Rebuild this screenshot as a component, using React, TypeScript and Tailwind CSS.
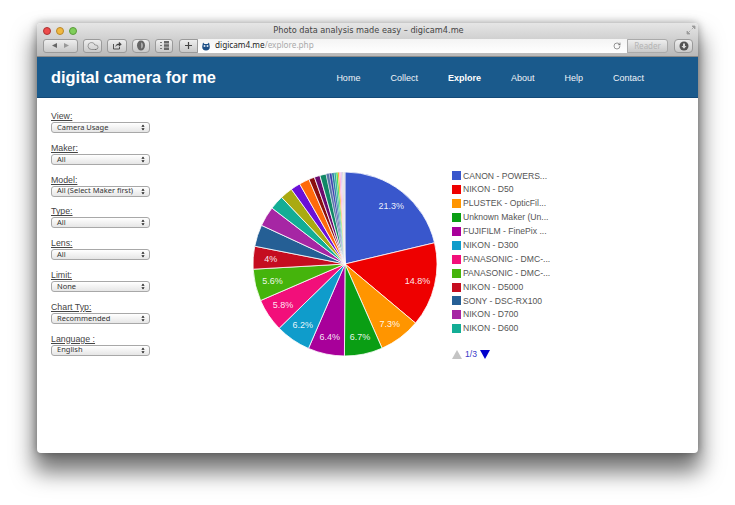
import { Cloud, RotateCw } from "lucide-react";

const NAV_LINKS = ["Home", "Collect", "Explore", "About", "Help", "Contact"];

const FILTERS = [
  { label: "View:", value: "Camera Usage" },
  { label: "Maker:", value: "All" },
  { label: "Model:", value: "All (Select Maker first)" },
  { label: "Type:", value: "All" },
  { label: "Lens:", value: "All" },
  { label: "Limit:", value: "None" },
  { label: "Chart Typ:", value: "Recommended" },
  { label: "Language :", value: "English" },
];

const LEGEND = [
  { name: "CANON - POWERS...", color: "bg-[#3957cc]" },
  { name: "NIKON - D50", color: "bg-[#ee0000]" },
  { name: "PLUSTEK - OpticFil...", color: "bg-[#ff9500]" },
  { name: "Unknown Maker (Un...", color: "bg-[#0a9e14]" },
  { name: "FUJIFILM - FinePix ...", color: "bg-[#a8009a]" },
  { name: "NIKON - D300", color: "bg-[#0f9ccb]" },
  { name: "PANASONIC - DMC-...", color: "bg-[#f20f7a]" },
  { name: "PANASONIC - DMC-...", color: "bg-[#45b40c]" },
  { name: "NIKON - D5000", color: "bg-[#c50d20]" },
  { name: "SONY - DSC-RX100", color: "bg-[#255f95]" },
  { name: "NIKON - D700", color: "bg-[#a626a4]" },
  { name: "NIKON - D600", color: "bg-[#13ad95]" },
];

const SLICES: [number, string, string?][] = [
  [21.3, "#3957cc", "21.3%"],
  [14.8, "#ee0000", "14.8%"],
  [7.3, "#ff9500", "7.3%"],
  [6.7, "#0a9e14", "6.7%"],
  [6.4, "#a8009a", "6.4%"],
  [6.2, "#0f9ccb", "6.2%"],
  [5.8, "#f20f7a", "5.8%"],
  [5.6, "#45b40c", "5.6%"],
  [4, "#c50d20", "4%"],
  [3.8, "#255f95"],
  [3.5, "#a626a4"],
  [2.5, "#13ad95"],
  [2.2, "#aaaa11"],
  [1.7, "#6a10d8"],
  [1.8, "#ff6a0a"],
  [1.0, "#8b0f0f"],
  [1.0, "#6c0a6e"],
  [1.1, "#118866"],
  [0.55, "#5574a6"],
  [0.45, "#3b3eac"],
  [0.4, "#1c7a9c"],
  [0.35, "#22aa99"],
  [0.3, "#33dd33"],
  [0.25, "#ff9900"],
  [0.25, "#ff99cc"],
  [0.25, "#ddbbee"],
  [0.25, "#cccccc"],
  [0.25, "#dddddd"],
];

const CX = 100;
const CY = 99;
const R = 92;

function point(angle: number, r: number) {
  const rad = ((angle - 90) * Math.PI) / 180;
  return [CX + r * Math.cos(rad), CY + r * Math.sin(rad)];
}

function Pie() {
  const total = SLICES.reduce((sum, s) => sum + s[0], 0);
  let angle = 0;
  return (
    <svg width="200" height="198" viewBox="0 0 200 198" className="shrink-0">
      {SLICES.map(([value, color, text], i) => {
        const sweep = (value / total) * 360;
        const [x1, y1] = point(angle, R);
        const [x2, y2] = point(angle + sweep, R);
        const [tx, ty] = point(angle + sweep / 2, R * 0.81);
        angle += sweep;
        return (
          <g key={i}>
            <path
              d={`M${CX} ${CY}L${x1} ${y1}A${R} ${R} 0 ${sweep > 180 ? 1 : 0} 1 ${x2} ${y2}Z`}
              fill={color}
              stroke="#fff"
              strokeWidth={value < 1 ? 0.35 : 0.8}
            />
            {text && (
              <text x={tx} y={ty + 3} textAnchor="middle" fontSize="9" fontWeight="500" fill="#fff" fillOpacity="0.92">
                {text}
              </text>
            )}
          </g>
        );
      })}
    </svg>
  );
}

function ToolButton({ className, children }: { className: string; children: React.ReactNode }) {
  return (
    <div className={`flex h-[14px] items-center justify-center rounded-[3px] border border-[#9a9a9a] bg-gradient-to-b from-[#eeeeee] to-[#c9c9c9] ${className}`}>
      {children}
    </div>
  );
}

function FakeSelect({ value }: { value: string }) {
  return (
    <div className="flex h-[11px] w-[99px] items-center justify-between rounded-[3px] border border-[#a8a8a8] bg-gradient-to-b from-white to-[#e6e6e6] pl-[5px] pr-[4px] font-['Noto_Sans',sans-serif] text-[7.5px] leading-none text-[#333]">
      <span>{value}</span>
      <svg width="4" height="7" viewBox="0 0 4 7">
        <path d="M2 0.5L3.6 2.7H0.4ZM2 6.5L0.4 4.3H3.6Z" fill="#222" />
      </svg>
    </div>
  );
}

export default function App() {
  return (
    <div className="h-[505px] w-[735px] overflow-hidden bg-white pl-[37px] pt-[23px] font-['Liberation_Sans',sans-serif]">
      <div className="flex h-[430px] w-[661px] flex-col overflow-hidden rounded-[4px] bg-white shadow-[0_16px_22px_3px_rgba(0,0,0,0.55),0_0_8px_rgba(0,0,0,0.35)]">
        {/* Browser chrome */}
        <div className="relative h-[34px] shrink-0 border-b border-[#8a8a8a] bg-gradient-to-b from-[#e6e6e6] to-[#b9b9b9]">
          <div className="flex h-[15px] items-center pl-[6px]">
            <div className="flex gap-[5px]">
              <span className="h-[8px] w-[8px] rounded-full border border-[#a33] bg-[#ee4b4b]" />
              <span className="h-[8px] w-[8px] rounded-full border border-[#b8862a] bg-[#f0b840]" />
              <span className="h-[8px] w-[8px] rounded-full border border-[#5a9a3a] bg-[#7fce5a]" />
            </div>
            <span className="flex-1 pr-[38px] text-center font-['DejaVu_Sans',sans-serif] text-[8.2px] text-[#444]">
              Photo data analysis made easy – digicam4.me
            </span>
            <svg width="10" height="10" viewBox="0 0 10 10" className="absolute right-[2px] top-[2px]">
              <path d="M6 1H9V4ZM4 9H1V6ZM7 3L5.8 4.2M3 7L4.2 5.8" fill="#999" stroke="#999" strokeWidth="0.8" />
            </svg>
          </div>
          <div className="flex h-[15px] items-center pl-[6px] pr-[5px]">
            <ToolButton className="w-[35px] gap-[5px]">
              <svg width="7" height="7" viewBox="0 0 7 7"><path d="M6 1V6L1 3.5Z" fill="#666" /></svg>
              <svg width="7" height="7" viewBox="0 0 7 7"><path d="M1 1V6L6 3.5Z" fill="#999" /></svg>
            </ToolButton>
            <ToolButton className="ml-[5px] w-[19px]">
              <Cloud size={12} strokeWidth={1} color="#555" />
            </ToolButton>
            <ToolButton className="ml-[5px] w-[20px]">
              <svg width="10" height="9" viewBox="0 0 10 9" fill="none" stroke="#444">
                <path d="M1.5 3V8H7.5V6" strokeWidth="0.9" />
                <path d="M3.5 5.5C4 3.5 5.5 2.8 7 2.8V1L9.5 3.3L7 5.5V4C5.5 4 4.5 4.4 3.5 5.5Z" fill="#444" strokeWidth="0.3" />
              </svg>
            </ToolButton>
            <ToolButton className="ml-[5px] w-[18px] rounded-[4px]">
              <svg width="10" height="11" viewBox="0 0 10 11">
                <path d="M5 0.5C7.5 0.5 9 2.5 9 5.5C9 8.5 7 10.5 5 10.5C3 10.5 1 8.5 1 5.5C1 2.5 2.5 0.5 5 0.5Z" fill="#666" />
                <path d="M5 2.5C6.2 2.5 7 3.8 7 5.5C7 7.2 6.2 8.5 5 8.5Z" fill="#aaa" />
              </svg>
            </ToolButton>
            <ToolButton className="ml-[5px] w-[18px]">
              <svg width="11" height="11" viewBox="0 0 11 11">
                <path d="M1 2H3V3H1ZM1 5H3V6H1ZM1 8H3V9H1Z" fill="#777" />
                <path d="M5 1H10V3.5H5ZM5 4.3H10V6.7H5ZM5 7.5H10V10H5Z" fill="#666" />
              </svg>
            </ToolButton>
            <ToolButton className="ml-[6px] w-[19px] rounded-r-none">
              <svg width="9" height="9" viewBox="0 0 9 9"><path d="M4.5 1V8M1 4.5H8" stroke="#444" strokeWidth="1.2" /></svg>
            </ToolButton>
            <div className="flex h-[14px] w-[429px] items-center bg-gradient-to-b from-[#f4f4f4] to-white pl-[3px] pr-[6px]">
              <svg width="10" height="10" viewBox="0 0 10 10">
                <path d="M2 1.5L3.5 3H6.5L8 1.5L8.8 5.5C9 8 7.5 9.5 5 9.5C2.5 9.5 1 8 1.2 5.5Z" fill="#1d4f86" />
                <circle cx="3.5" cy="5" r="1" fill="#dbe7f3" />
                <circle cx="6.5" cy="5" r="1" fill="#dbe7f3" />
              </svg>
              <span className="ml-[4px] font-['Noto_Sans',sans-serif] text-[8.2px] text-[#222]">
                digicam4.me<span className="text-[#aaa]">/explore.php</span>
              </span>
              <RotateCw size={8} strokeWidth={1.6} color="#444" className="ml-auto" />
            </div>
            <ToolButton className="w-[41px] rounded-l-none border-[#aaa]">
              <span className="font-['Noto_Sans',sans-serif] text-[8px] text-[#b5b5b5]">Reader</span>
            </ToolButton>
            <ToolButton className="ml-[6px] w-[19px] rounded-[4px]">
              <svg width="10" height="10" viewBox="0 0 10 10">
                <circle cx="5" cy="5" r="4.5" fill="#555" />
                <path d="M4 2.5H6V5H7.5L5 7.8L2.5 5H4Z" fill="#ddd" />
              </svg>
            </ToolButton>
          </div>
        </div>

        {/* Site header */}
        <header className="flex h-[41px] shrink-0 items-center justify-between border-b border-[#134a78] bg-[#1a5a8c] pl-[14px] pr-[54px] text-white">
          <span className="mt-[1px] text-[16.4px] font-bold leading-none">digital camera for me</span>
          <nav className="mt-[3px] flex gap-[30px] text-[9px] leading-none text-[#f0f4f8]">
            {NAV_LINKS.map((link) => (
              <span key={link} className={link === "Explore" ? "font-bold text-white" : ""}>
                {link}
              </span>
            ))}
          </nav>
        </header>

        {/* Content */}
        <main className="flex flex-1 pl-[14px]">
          <aside className="flex w-[99px] shrink-0 flex-col gap-[9.8px] pt-[13px]">
            {FILTERS.map((f) => (
              <div key={f.label}>
                <div className="h-[11px] text-[8.8px] leading-[11px] text-[#444] underline">{f.label}</div>
                <FakeSelect value={f.value} />
              </div>
            ))}
          </aside>

          <div className="ml-[95px] mt-[67px]">
            <Pie />
          </div>

          <div className="ml-[7px] mt-[71px] text-[8.6px] text-[#555]">
            <ul className="flex flex-col">
              {LEGEND.map((item, i) => (
                <li key={i} className="flex h-[13.9px] items-center gap-[2px]">
                  <span className={`h-[9px] w-[9px] ${item.color}`} />
                  <span>{item.name}</span>
                </li>
              ))}
            </ul>
            <div className="mt-[12px] flex items-center gap-[3px]">
              <svg width="10" height="9" viewBox="0 0 10 9"><path d="M5 0L10 9H0Z" fill="#c4c4c4" /></svg>
              <span className="text-[#3a3ac8]">1/3</span>
              <svg width="10" height="9" viewBox="0 0 10 9"><path d="M0 0H10L5 9Z" fill="#0000cc" /></svg>
            </div>
          </div>
        </main>
      </div>
    </div>
  );
}
